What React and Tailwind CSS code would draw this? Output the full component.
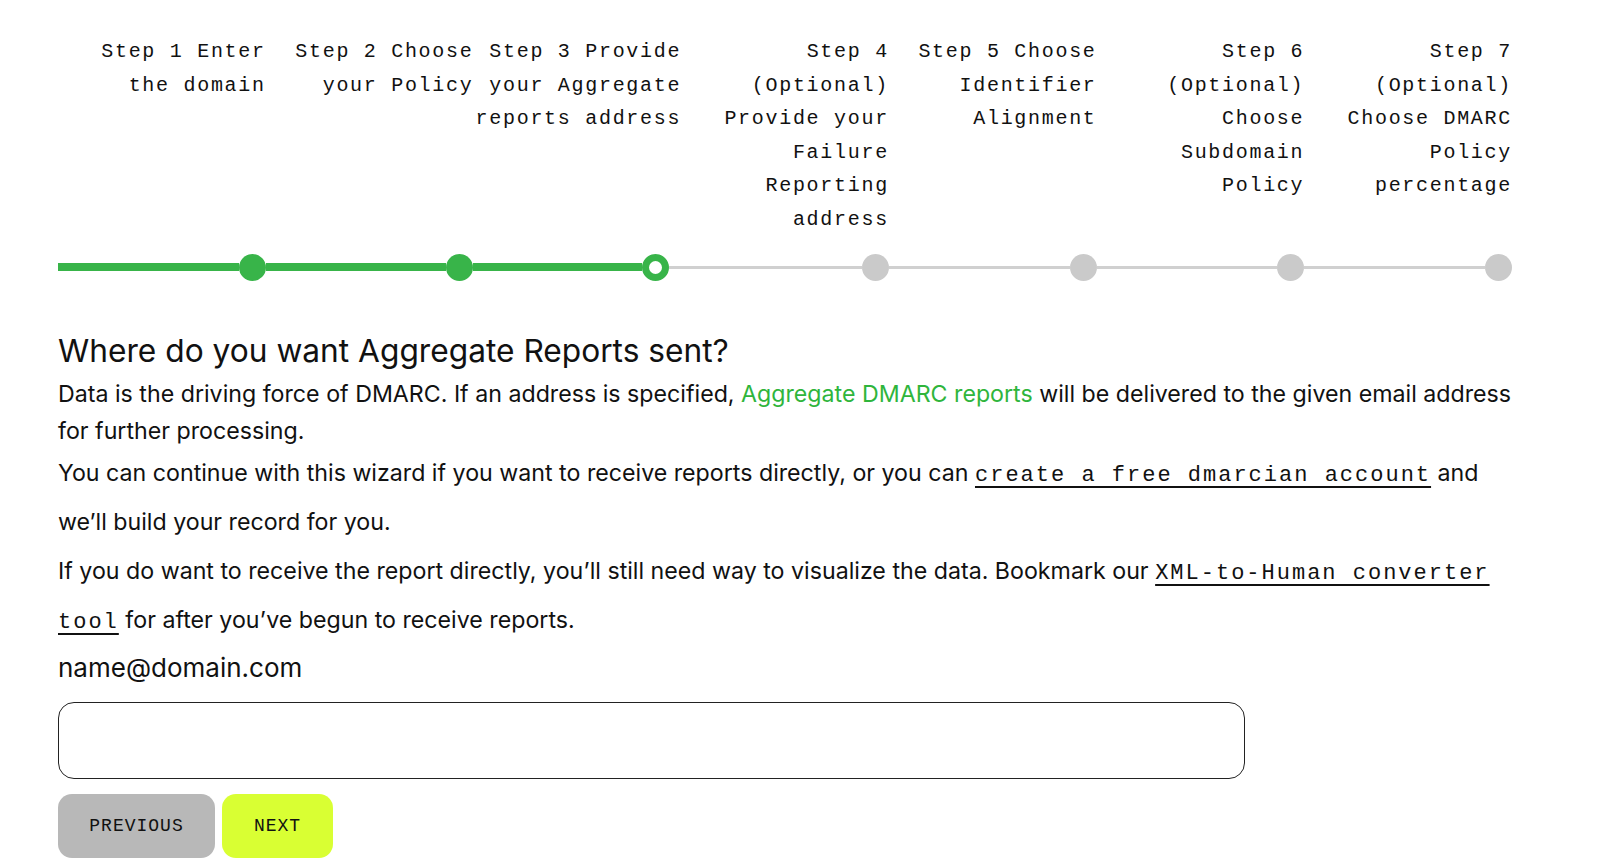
const steps = [
  'Step 1 Enter the domain',
  'Step 2 Choose your Policy',
  'Step 3 Provide your Aggregate reports address',
  'Step 4 (Optional) Provide your Failure Reporting address',
  'Step 5 Choose Identifier Alignment',
  'Step 6 (Optional) Choose Subdomain Policy',
  'Step 7 (Optional) Choose DMARC Policy percentage',
];

const current = 2;

const Stepper = () => {
  return (
    <div className="w-[1454px]">
      <div className="grid grid-cols-7 font-['Liberation_Mono',monospace] text-[20px] leading-[33.5px] tracking-[1.7px] text-[#111]">
        {steps.map((s) => (
          <div key={s} className="text-right">
            {s}
          </div>
        ))}
      </div>
      <div className="mt-[17px] grid h-[28px] grid-cols-7 items-center">
        {steps.map((s, i) => (
          <div key={s} className="flex items-center">
            {i <= current ? (
              <div className="h-[8px] flex-1 bg-[#38b449]" />
            ) : (
              <div className="h-[3px] flex-1 bg-[#d0d0d0]" />
            )}
            {i < current && <div className="h-[27px] w-[27px] rounded-full bg-[#38b449]" />}
            {i === current && (
              <>
                <div className="h-[27px] w-[27px] rounded-full border-[7px] border-[#38b449] bg-white" />
                <div className="h-[3px] w-[12px] bg-[#d0d0d0]" />
              </>
            )}
            {i > current && <div className="h-[27px] w-[27px] rounded-full bg-[#cacaca]" />}
          </div>
        ))}
      </div>
    </div>
  );
};

const MonoLink = ({ children }) => (
  <a href="#" className="font-['Liberation_Mono',monospace] text-[22px] leading-[20px] tracking-[2px] text-[#111] underline underline-offset-[5px]">
    {children}
  </a>
);

const App = () => {
  return (
    <div className="min-h-screen bg-white pl-[58px] pt-[35px] font-['Inter',sans-serif] text-[#111]">
      <Stepper />

      <h2 className="mt-[50px] text-[31.7px] leading-[40px] font-normal">
        Where do you want Aggregate Reports sent?
      </h2>
      <div className="w-[1460px] text-[23.2px]">
        <p className="mt-[5px] leading-[36.5px]">
          Data is the driving force of DMARC. If an address is specified,{' '}
          <a href="#" className="text-[#2fb53c]">Aggregate DMARC reports</a> will be delivered to the given
          email address for further processing.
        </p>
        <p className="leading-[49px]">
          You can continue with this wizard if you want to receive reports directly, or you can{' '}
          <MonoLink>create a free dmarcian account</MonoLink> and we’ll build your record for you.
        </p>
        <p className="leading-[49px]">
          If you do want to receive the report directly, you’ll still need way to visualize the data. Bookmark our{' '}
          <MonoLink>XML-to-Human converter tool</MonoLink> for after you’ve begun to receive reports.
        </p>
      </div>

      <label className="mt-[5px] block text-[26px] leading-[36px]">name@domain.com</label>
      <input
        type="email"
        className="mt-[16px] block h-[77px] w-[1187px] rounded-[16px] border-[1.5px] border-[#222] bg-white px-4 text-[22px] outline-none"
      />

      <div className="mt-[15px] flex gap-[7px] font-['Liberation_Mono',monospace] text-[18px] tracking-[1px] text-[#111]">
        <button className="h-[64px] w-[157px] rounded-[14px] bg-[#b8b8b8]">PREVIOUS</button>
        <button className="h-[64px] w-[111px] rounded-[14px] bg-[#d9ff33]">NEXT</button>
      </div>
    </div>
  );
};

export default App;
